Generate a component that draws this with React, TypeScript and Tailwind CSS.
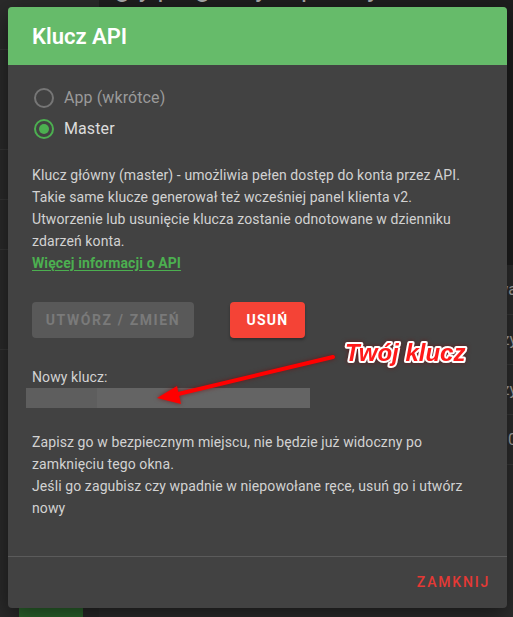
import React from 'react';

const Radio = ({ checked, label }: { checked: boolean; label: string }) => (
  <div className="flex h-[31px] items-center">
    <span
      className={`ml-[2px] flex h-5 w-5 items-center justify-center rounded-full border-2 ${
        checked ? 'border-[#4caf50]' : 'border-[#767676]'
      }`}
    >
      {checked && <span className="h-[10px] w-[10px] rounded-full bg-[#4caf50]" />}
    </span>
    <span className={`ml-[10px] text-[16px] tracking-[0.1px] ${checked ? 'text-[#dcdcdc]' : 'text-[#9a9a9a]'}`}>
      {label}
    </span>
  </div>
);

const App: React.FC = () => {
  return (
    <div className="relative h-[617px] w-[513px] overflow-hidden bg-[#1e1e1e] font-['Roboto','Liberation_Sans',sans-serif]">
      {/* page behind the dialog */}
      <div className="flex h-full">
        <div className="flex w-[99px] flex-col bg-[#2a2a2a] pt-[7px]">
          <div className="h-[43px] border-b border-[#353535]" />
          <div className="h-[100px] border-b border-[#353535]" />
          <div className="h-[50px] border-b border-[#353535]" />
          <div className="h-[50px] border-b border-[#353535]" />
          <div className="h-[100px] border-b border-[#353535]" />
          <div className="flex-1" />
          <div className="mx-[19px] h-[30px] w-[64px] bg-[#2e6b30]" />
        </div>
        <div className="flex flex-1 flex-col">
          <div className="h-[265px] px-4 text-[#bbb]">
            <div className="-mt-[27px] text-[26px] leading-[30px] text-[#aaa]">gry programy i aplikacje</div>
            <div className="mt-[75px] space-y-[6px] text-[16px] leading-[22px]">
              <p>Integracja z zewnętrznymi systemami, generowanie kluczy dostępowych oraz ich zarządzanie</p>
              <p className="pt-8">Możesz tu zarządzać kluczami API używanymi przez aplikacje i zewnętrzne narzędzia</p>
            </div>
          </div>
          <div className="flex-1 bg-[#2d2d2d] text-[16px] text-[#aaa]">
            {['nazwa', '0 kluczy', '0 kluczy', '0'].map((t, i) => (
              <div key={i} className="flex h-[50px] items-center justify-end border-b border-[#3a3a3a]">
                <span className="translate-x-[4px]">{t}</span>
              </div>
            ))}
          </div>
        </div>
      </div>

      {/* dialog */}
      <div className="absolute left-2 top-[7px] flex w-[499px] flex-col overflow-hidden rounded-[4px] bg-[#424242] shadow-[0_8px_24px_rgba(0,0,0,0.5)]">
        <div className="flex h-[58px] items-center bg-[#66bb6a] px-6">
          <h2 className="text-[22px] font-semibold text-white">Klucz API</h2>
        </div>

        <div className="flex flex-col border-b border-[#5b5b5b] px-6 pb-[37px] pt-[17px]">
          <Radio checked={false} label="App (wkrótce)" />
          <Radio checked label="Master" />

          <div className="mt-5 text-[14px] leading-[22px] tracking-[0.1px] text-[#d2d2d2]">
            <p>Klucz główny (master) - umożliwia pełen dostęp do konta przez API.</p>
            <p>Takie same klucze generował też wcześniej panel klienta v2.</p>
            <p>Utworzenie lub usunięcie klucza zostanie odnotowane w dzienniku zdarzeń konta.</p>
            <a className="font-bold text-[#4caf50] underline underline-offset-2">Więcej informacji o API</a>
          </div>

          <div className="mt-7 flex gap-9">
            <button className="h-9 w-[162px] rounded-[4px] bg-[#595959] text-[14px] font-bold tracking-[1.6px] text-[#7a7a7a]">
              UTWÓRZ / ZMIEŃ
            </button>
            <button className="h-9 w-[75px] rounded-[4px] bg-[#f44336] text-[14px] font-bold tracking-[1.2px] text-white shadow-[0_2px_3px_rgba(0,0,0,0.3)]">
              USUŃ
            </button>
          </div>

          <div className="mt-[29px] text-[14px] leading-5 tracking-[0.1px] text-[#d2d2d2]">Nowy klucz:</div>
          <div className="-ml-[6px] mt-px flex h-5 w-[284px]">
            <div className="w-[71px] bg-[#5e5e5e]" />
            <div className="flex-1 bg-[#646464]" />
          </div>

          <div className="mt-[23px] text-[14px] leading-[22px] tracking-[0.1px] text-[#d2d2d2]">
            <p>Zapisz go w bezpiecznym miejscu, nie będzie już widoczny po zamknięciu tego okna.</p>
            <p>Jeśli go zagubisz czy wpadnie w niepowołane ręce, usuń go i utwórz nowy</p>
          </div>
        </div>

        <div className="flex h-[51px] items-center justify-end pr-[17px]">
          <button className="text-[14px] font-medium tracking-[1.8px] text-[#e53935]">ZAMKNIJ</button>
        </div>
      </div>

      {/* annotation */}
      <svg className="pointer-events-none absolute left-0 top-0 drop-shadow-[0_0_2px_rgba(120,0,0,0.6)]" width="513" height="617">
        <line x1="333" y1="357" x2="174" y2="395" stroke="#ff0000" strokeWidth="4" strokeLinecap="round" />
        <polygon points="157,398 177,386 181,404" fill="#ff0000" />
        <text
          x="345"
          y="361"
          fontFamily="Liberation Sans, Arial, sans-serif"
          fontWeight="bold"
          fontStyle="italic"
          fontSize="24"
          fill="#ff1a1a"
          stroke="#ffffff"
          strokeWidth="4"
          strokeLinejoin="round"
          paintOrder="stroke"
        >
          Twój klucz
        </text>
      </svg>
    </div>
  );
};

export default App;
